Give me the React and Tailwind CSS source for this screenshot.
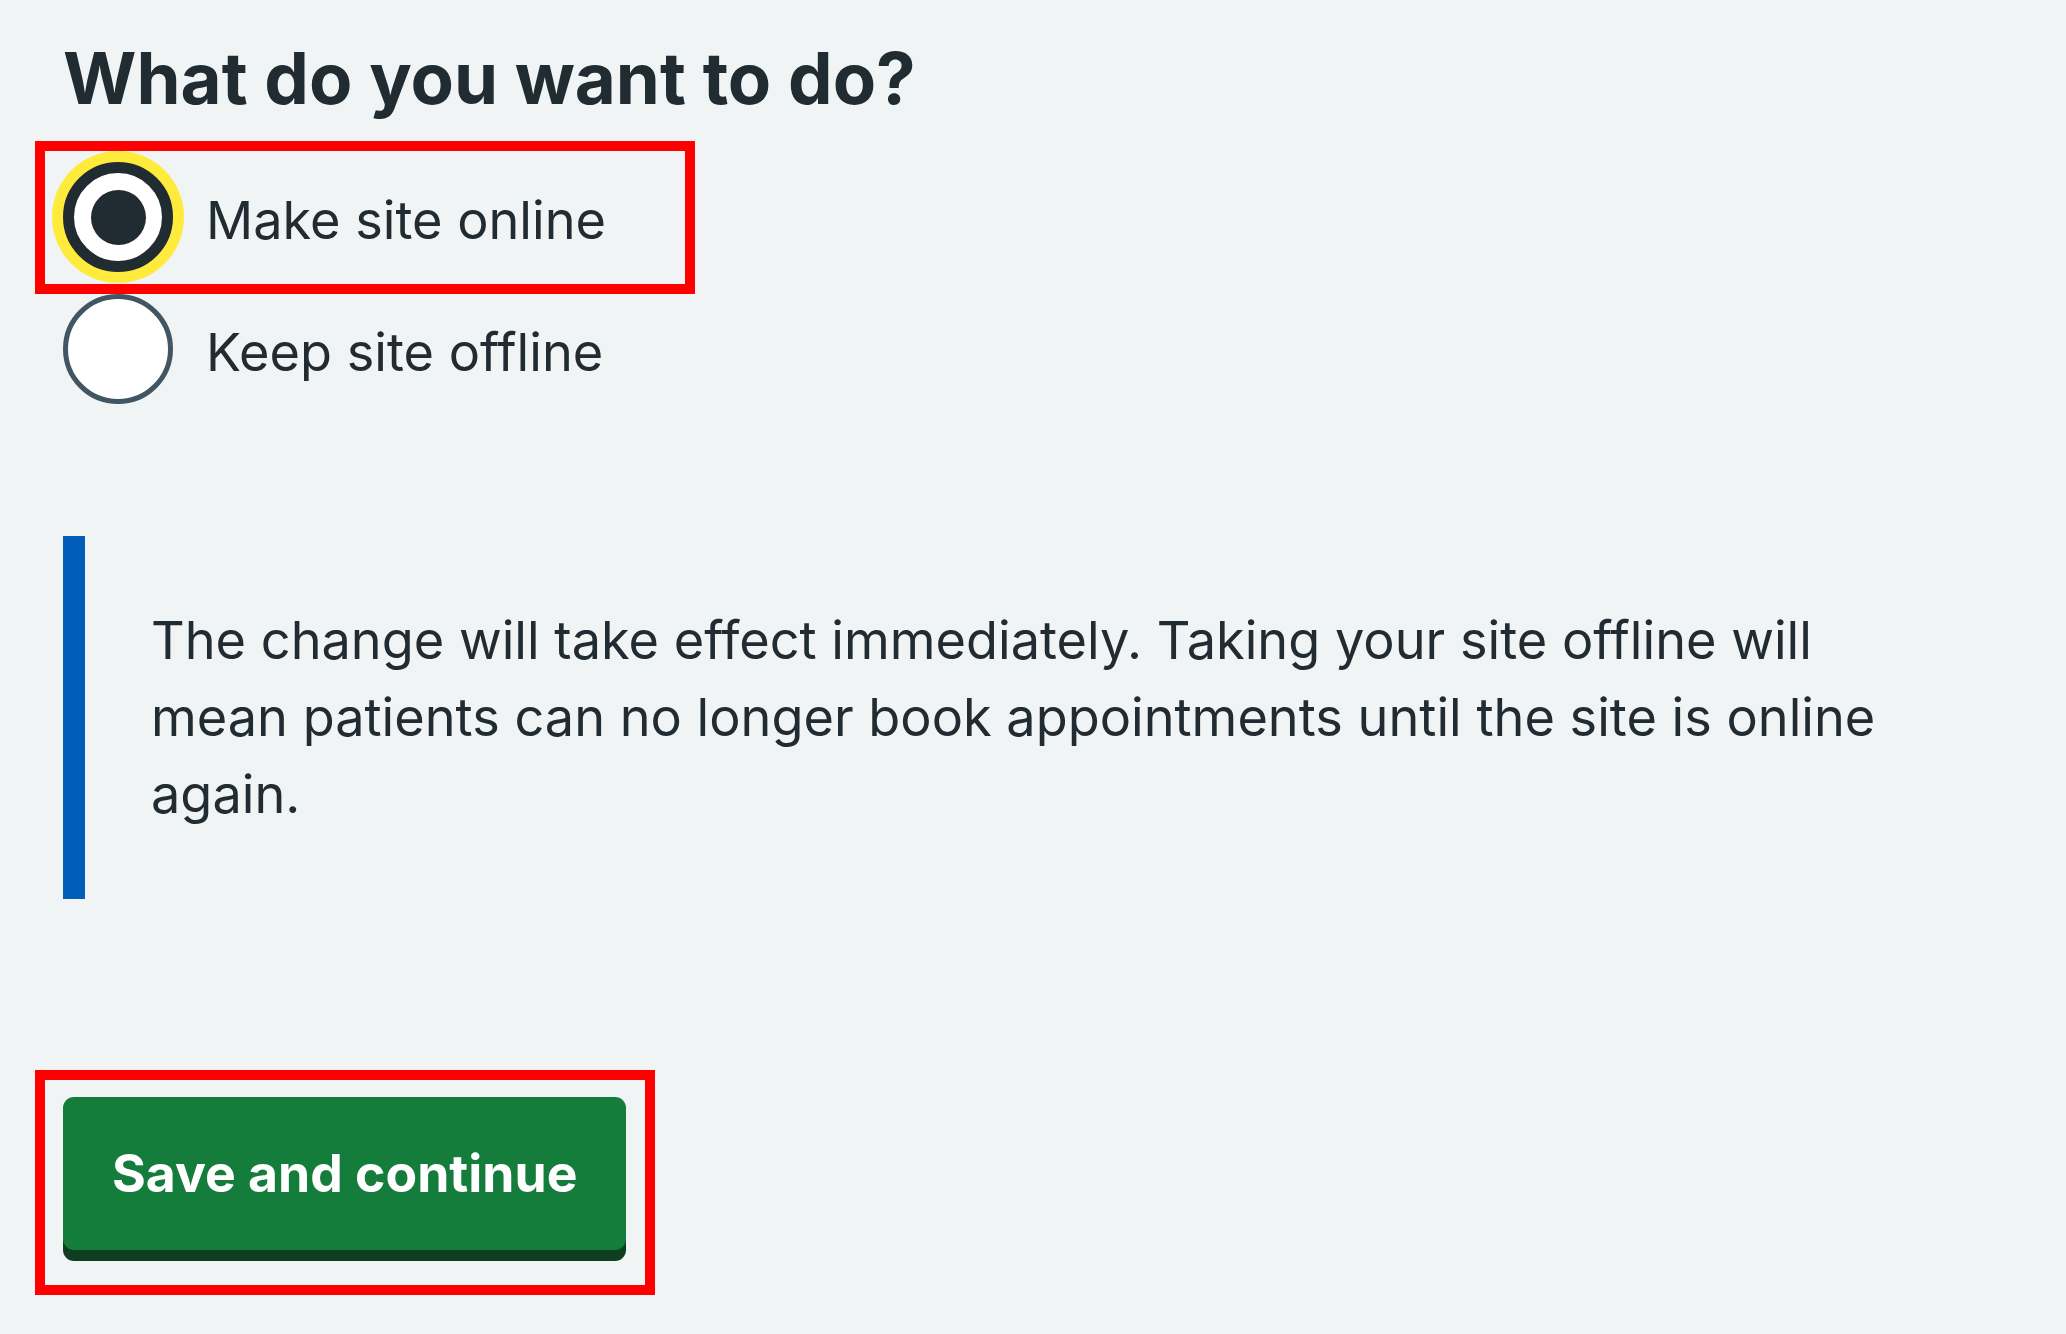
import { useState } from "react";

const options = [
  { value: "online", label: "Make site online" },
  { value: "offline", label: "Keep site offline" },
];

function Radio({ checked }) {
  if (checked) {
    return (
      <span className="flex h-[110px] w-[110px] shrink-0 items-center justify-center rounded-full border-[11px] border-[#212b32] bg-white shadow-[0_0_0_11px_#ffeb3b]">
        <span className="h-[55px] w-[55px] rounded-full bg-[#212b32]" />
      </span>
    );
  }
  return (
    <span className="h-[110px] w-[110px] shrink-0 rounded-full border-[5px] border-[#425563] bg-white" />
  );
}

export default function App() {
  const [choice, setChoice] = useState("online");

  return (
    <div className="min-h-screen bg-[#f0f4f5] px-[63px] pt-[34px] pb-[40px] font-['Inter',sans-serif] text-[#212b32]">
      <h1 className="mb-[40px] text-[70.8px] font-bold leading-[88px]">
        What do you want to do?
      </h1>

      <div className="flex flex-col gap-[22px]">
        {options.map(({ value, label }) => (
          <label
            key={value}
            onClick={() => setChoice(value)}
            className="relative flex h-[110px] cursor-pointer items-start"
          >
            <Radio checked={choice === value} />
            <span className="ml-[33px] pt-[20px] text-[52.25px] leading-[77px]">
              {label}
            </span>
            {value === "online" && (
              <span className="pointer-events-none absolute -left-[28px] -top-[21px] h-[153px] w-[660px] border-[10px] border-[#ff0000]" />
            )}
          </label>
        ))}
      </div>

      <div className="mt-[132px] border-l-[22px] border-[#005eb8] py-[66px] pl-[66px] pr-[66px]">
        <p className="text-[52.25px] leading-[77px]">
          The change will take effect immediately. Taking your site offline will
          mean patients can no longer book appointments until the site is online
          again.
        </p>
      </div>

      <div className="relative mt-[198px] inline-block">
        <button
          type="button"
          className="rounded-[11px] bg-[#147d3b] px-[49px] py-[38px] text-[51.7px] font-bold leading-[77px] text-white shadow-[0_11px_0_#0f3d1f]"
        >
          Save and continue
        </button>
        <span className="pointer-events-none absolute -left-[28px] -top-[27px] h-[225px] w-[620px] border-[10px] border-[#ff0000]" />
      </div>
    </div>
  );
}
